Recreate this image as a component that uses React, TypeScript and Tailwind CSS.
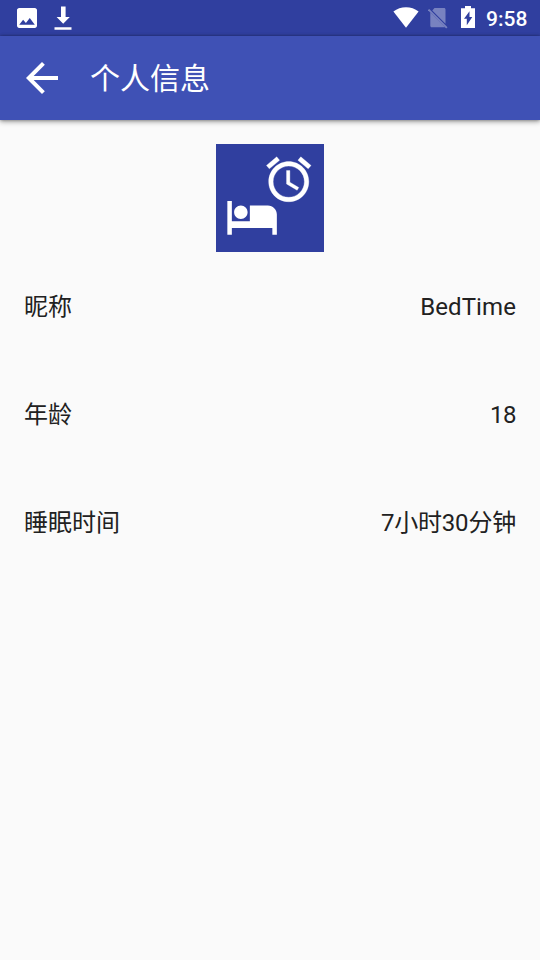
const profile = [
  { label: '昵称', value: 'BedTime', tracking: 'tracking-[0.1px]' },
  { label: '年龄', value: '18', tracking: 'tracking-[-0.5px]' },
  { label: '睡眠时间', value: '7小时30分钟', tracking: 'tracking-[-0.2px]' },
];

function StatusBar() {
  return (
    <div className="flex h-9 items-start justify-between bg-[#303f9f] pl-[17px] pr-3 text-white">
      <div className="flex items-start gap-[17px]">
        <svg className="mt-2 h-5 w-5" viewBox="3 3 18 18" fill="currentColor">
          <path d="M21 19V5c0-1.1-.9-2-2-2H5c-1.1 0-2 .9-2 2v14c0 1.1.9 2 2 2h14c1.1 0 2-.9 2-2zM8.5 13.5l2.5 3.01L14.5 12l4.5 6H5l3.5-4.5z" />
        </svg>
        <svg className="mt-1.5 h-6 w-[18px]" viewBox="0 0 18 24" fill="currentColor">
          <path d="M7 .5h4.6V11h4.2L9.2 17.8 2.6 11H7zM.5 21.3h17v2.4H.5z" />
        </svg>
      </div>
      <div className="flex items-start">
        <svg className="mt-[7px] h-[21px] w-[26px]" viewBox="0 0 26 21" fill="currentColor">
          <path d="M13 20.7.4 4.6C4 1.7 8.3.2 13 .2s9 1.5 12.6 4.4z" />
        </svg>
        <svg className="ml-[9px] mt-2 h-[21px] w-5" viewBox="0 0 20 21" fill="currentColor" opacity="0.35">
          <path d="M6.500 0h9.500c.9 0 1.500.6 1.500 1.500v14.300L4.300 2.500zM2.300 4.500 17 19.300H3.800c-.9 0-1.500-.6-1.500-1.500z" />
          <path d="M1.200.9 19.500 19.200l-1.300 1.300L-.1 2.200z" />
        </svg>
        <svg className="ml-[13.5px] mt-1.5 h-[22px] w-3.5" viewBox="0 0 14 22" fill="currentColor" fillRule="evenodd">
          <path d="M4 0h6v2.200h4V22H0V2.200h4zM8.500 5.200 3 12.800h2.800v6.500L11.300 10.900H8.500z" />
        </svg>
        <span className="ml-[11px] mr-px mt-[7px] w-[41px] whitespace-nowrap font-['Roboto',sans-serif] text-[21px] font-medium leading-6">9:58</span>
      </div>
    </div>
  );
}

function AppBar() {
  return (
    <header className="flex h-[84px] items-center bg-[#3f51b5] pl-[18px] text-white shadow-[0_2px_5px_rgba(0,0,0,0.32),0_0_3px_rgba(0,0,0,0.35)]">
      <svg className="h-12 w-12" viewBox="0 0 24 24" fill="currentColor">
        <path d="M20 11H7.83l5.59-5.59L12 4l-8 8 8 8 1.410-1.410L7.830 13H20v-2z" />
      </svg>
      <h1 className="ml-6 mt-0.5 text-[30px] leading-9">个人信息</h1>
    </header>
  );
}

function Avatar() {
  return (
    <svg className="mx-auto h-[108px] w-[108px] bg-[#303f9f]" viewBox="0 0 108 108" fill="white">
      <path
        transform="translate(9.1 45.700) scale(2.250)"
        d="M7 13c1.660 0 3-1.340 3-3S8.660 7 7 7s-3 1.340-3 3 1.340 3 3 3zm12-6h-8v7H3V5H1v15h2v-3h18v3h2v-9c0-2.210-1.790-4-4-4z"
      />
      <path
        transform="translate(46 8.700) scale(2.230)"
        d="M22 5.720l-4.600-3.860-1.290 1.530 4.600 3.860L22 5.720zM7.880 3.390L6.600 1.860 2 5.710l1.290 1.530 4.590-3.850zM12.500 8H11v6l4.750 2.850.75-1.230-4-2.370V8zM12 4c-4.970 0-9 4.030-9 9s4.020 9 9 9c4.970 0 9-4.030 9-9s-4.030-9-9-9zm0 16c-3.870 0-7-3.130-7-7s3.130-7 7-7 7 3.130 7 7-3.130 7-7 7z"
        stroke="white"
        strokeWidth="0.15"
      />
    </svg>
  );
}

export default function App() {
  return (
    <div className="flex min-h-screen flex-col bg-[#fafafa] font-['Roboto','Noto_Sans_CJK_SC',sans-serif] text-[#212121]">
      <StatusBar />
      <AppBar />
      <main className="flex-1 pt-6">
        <Avatar />
        {profile.map((item) => (
          <div key={item.label} className="flex h-[108px] items-center justify-between px-6 pt-0.5 text-2xl">
            <span>{item.label}</span>
            <span className={item.tracking}>{item.value}</span>
          </div>
        ))}
      </main>
    </div>
  );
}
